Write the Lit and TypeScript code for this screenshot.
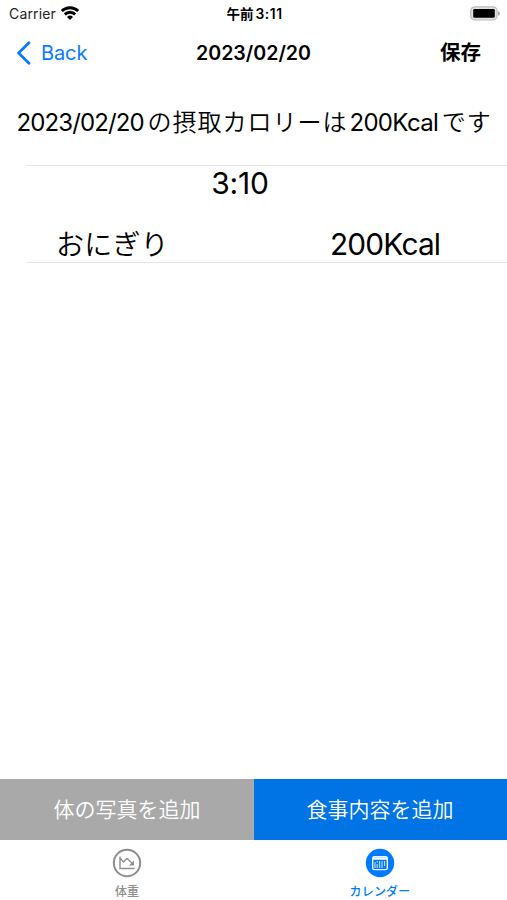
import { LitElement, html, css, svg } from "lit";
import { customElement } from "lit/decorators.js";

const wifi = svg`<g fill="none" stroke="#000" stroke-width="2.9">
  <path d="M.8 5 A11.8 11.8 0 0 1 17.2 5"/><path d="M3.8 8.4 A7.4 7.4 0 0 1 14.2 8.4"/></g>
  <path d="M9 14 L6 11 A4.3 4.3 0 0 1 12 11 Z"/>`;

@customElement("app-root")
export class AppRoot extends LitElement {
  static styles = css`
    :host {
      display: flex;
      flex-direction: column;
      width: 507px;
      height: 900px;
      overflow: hidden;
      background: #fff;
      color: #000;
      font-family: Inter, "Noto Sans CJK JP", sans-serif;
      white-space: nowrap;
    }
    svg { display: block; flex: none; }
    .status, .nav {
      display: grid;
      grid-template-columns: 1fr auto 1fr;
      align-items: center;
      box-sizing: border-box;
    }
    .status { height: 27px; padding: 0 7px 0 9px; font-size: 14px; }
    .left { display: flex; align-items: center; }
    .carrier { gap: 5px; color: #222; letter-spacing: 0.15px; }
    .clock { font-size: 13.8px; line-height: 26px; font-weight: 600; display: flex; align-items: baseline; gap: 2px; letter-spacing: 0.55px; }
    .clock .jp { font-weight: 700; font-size: 13.5px; letter-spacing: 0; }
    .battery { justify-self: end; }
    .nav { height: 52px; padding: 0 16px; font-size: 20px; }
    .back { color: #0a7aff; gap: 10px; letter-spacing: -0.1px; }
    .title { font-weight: 600; font-size: 19.6px; line-height: 24px; padding-bottom: 1px; }
    .save { justify-self: end; font-weight: 700; font-size: 20.5px; line-height: 26px; margin-right: 10px; }
    .summary {
      display: flex;
      align-items: baseline;
      height: 86px;
      line-height: 87px;
      padding-left: 16.5px;
      font-size: 24px;
    }
    .date { letter-spacing: -0.87px; margin-right: 3.5px; }
    .summary .jp { letter-spacing: 1px; font-weight: 350; }
    .total { letter-spacing: -0.65px; margin: 0 3.5px 0 2px; }
    .list { margin-left: 26px; border: solid #e6e6e8; border-width: 1px 0; height: 96px; }
    .time { height: 35px; line-height: 35px; width: 428px; text-align: center; font-size: 30px; letter-spacing: -0.2px; }
    .meal { display: flex; margin-top: 25px; height: 36px; line-height: 37px; }
    .name { width: 275px; padding-left: 30px; font-size: 28px; box-sizing: border-box; letter-spacing: 0.2px; line-height: 38px; font-weight: 350; }
    .kcal { padding-left: 29px; font-size: 29.8px; letter-spacing: -0.8px; }
    .grow { flex: 1; }
    .actions, .tabs { display: grid; grid-template-columns: 254px 253px; }
    .action {
      height: 61px;
      line-height: 61px;
      text-align: center;
      color: #fff;
      font-size: 21px;
      font-weight: 350;
      background: #a9a9a9;
    }
    .primary { background: #0074e4; box-sizing: border-box; padding-right: 1px; }
    .tabs { height: 60px; }
    .tab { display: flex; flex-direction: column; align-items: center; padding-top: 8px; color: #8e8e8e; font-size: 12px; line-height: 18px; font-weight: 500; }
    .tab svg { margin-bottom: 5px; }
    .active { color: #007aff; padding-right: 1px; }
    .active span { letter-spacing: 0.2px; }
  `;

  render() {
    return html`
      <div class="status">
        <div class="left carrier"><span>Carrier</span>
          <svg width="18" height="15" viewBox="0 0 18 15">${wifi}</svg></div>
        <div class="clock"><span class="jp">午前</span><span>3:11</span></div>
        <svg class="battery" width="30" height="15" viewBox="0 0 30 15">
          <rect x=".8" y=".8" width="26.2" height="13.2" rx="4" fill="#e2e2e2" stroke="#bdbdbd" stroke-width="1.2"/>
          <rect x="3.2" y="3" width="21.6" height="8.8" rx="1.2"/>
          <path d="M28 5 Q30 5.6 30 7.4 Q30 9.2 28 9.8Z" fill="#aaa"/>
        </svg>
      </div>
      <div class="nav">
        <div class="left back">
          <svg width="15" height="24" viewBox="0 0 15 24"><path d="M13 1.8 L2.6 12 L13 22.2" fill="none" stroke="#0a7aff" stroke-width="2.8" stroke-linecap="round" stroke-linejoin="round"/></svg>
          <span>Back</span>
        </div>
        <div class="title">2023/02/20</div>
        <div class="save">保存</div>
      </div>
      <div class="summary"><span class="date">2023/02/20</span><span class="jp">の摂取カロリーは</span><span class="total">200Kcal</span><span class="jp">です</span></div>
      <div class="list">
        <div class="time">3:10</div>
        <div class="meal"><span class="name">おにぎり</span><span class="kcal">200Kcal</span></div>
      </div>
      <div class="grow"></div>
      <div class="actions">
        <div class="action">体の写真を追加</div>
        <div class="action primary">食事内容を追加</div>
      </div>
      <div class="tabs">
        <div class="tab">
          <svg width="30" height="30" viewBox="0 0 30 30" fill="none" stroke="#8e8e8e">
            <circle cx="15" cy="15" r="13.2" stroke-width="2"/>
            <path d="M8 8.5 V20.5 H22.5 M8.5 10.5 L11.5 14 L15 10.5 L20.5 15.5" stroke-width="1.4"/>
            <path d="M22 12.5 V17.5 H17 Z" fill="#8e8e8e" stroke="none"/>
          </svg>
          <span>体重</span>
        </div>
        <div class="tab active">
          <svg width="30" height="30" viewBox="0 0 30 30">
            <circle cx="15" cy="15" r="14.2" fill="#007aff"/>
            <rect x="7.7" y="8.7" width="14.6" height="13" rx="1.6" fill="none" stroke="#fff" stroke-width="1.3"/>
            <path d="M8 10.5 H22" stroke="#fff" stroke-width="2.4"/>
            <path d="M10 14V20M12.2 13V14.5M12.2 16V20M14.6 13V20M17 13V20M19.5 13V18" stroke="#fff" stroke-width="1.1" opacity=".75"/>
          </svg>
          <span>カレンダー</span>
        </div>
      </div>`;
  }
}
